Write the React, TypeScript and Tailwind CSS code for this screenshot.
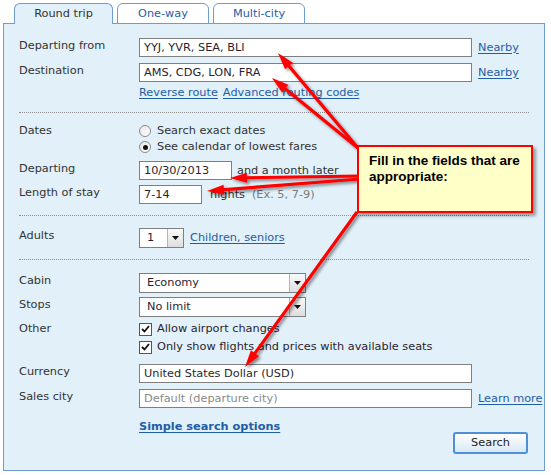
import React from "react";

const Row = ({ label, children, className = "", pt = "pt-[1px]" }: { label?: string; children?: React.ReactNode; className?: string; pt?: string }) => (
  <div className={`flex items-start whitespace-nowrap ${className}`}>
    <div className={`w-[120px] shrink-0 text-[#333] ${pt}`}>{label}</div>
    <div className="flex items-center">{children}</div>
  </div>
);

const TextBox = ({ value, width, placeholder }: { value?: string; width: string; placeholder?: string }) => (
  <input
    readOnly
    defaultValue={value}
    placeholder={placeholder}
    className={`h-[19px] ${width} border border-[#7f7f7f] bg-white px-[4px] text-[#2a1f2e] placeholder:text-[#8a8a8a] outline-none`}
  />
);

const Select = ({ value, width }: { value: string; width: string }) => (
  <div className={`flex h-[20px] ${width} border border-[#7f7f7f] bg-white`}>
    <div className="flex-1 pl-[7px] leading-[18px] text-[#2a1f2e]">{value}</div>
    <div className="flex w-[16px] items-center justify-center border-l border-[#b4b4b4] bg-gradient-to-b from-[#fafafa] to-[#dedede]">
      <svg width="7" height="4" viewBox="0 0 7 4">
        <path d="M0 0h7L3.5 4z" fill="#111" />
      </svg>
    </div>
  </div>
);

const Radio = ({ checked }: { checked?: boolean }) => (
  <span className="flex h-[12px] w-[12px] items-center justify-center rounded-full border border-[#8a8a8a] bg-gradient-to-br from-[#e6e6e6] to-white">
    {checked && <span className="h-[5px] w-[5px] rounded-full bg-[#111]" />}
  </span>
);

const Checkbox = () => (
  <span className="flex h-[13px] w-[13px] items-center justify-center border border-[#555] bg-white">
    <svg width="9" height="8" viewBox="0 0 9 8">
      <path d="M1 4l2.5 2.5L8 1" stroke="#111" strokeWidth="1.8" fill="none" />
    </svg>
  </span>
);

const Link = ({ children, bold }: { children: React.ReactNode; bold?: boolean }) => (
  <a className={`text-[#1f5da6] underline underline-offset-[2px] ${bold ? "font-bold" : ""}`}>{children}</a>
);

const Separator = ({ className }: { className: string }) => (
  <div className={`border-t border-dotted border-[#8c8c8c] ${className}`} />
);

// arrow from (x1,y1) to the tip (x2,y2)
const Arrow = ({ x1, y1, x2, y2 }: { x1: number; y1: number; x2: number; y2: number }) => {
  const dx = x2 - x1;
  const dy = y2 - y1;
  const len = Math.hypot(dx, dy);
  const ux = dx / len;
  const uy = dy / len;
  const head = 17;
  const half = 5;
  const bx = x2 - ux * head;
  const by = y2 - uy * head;
  const pts = `${x2},${y2} ${bx - uy * half},${by + ux * half} ${bx + uy * half},${by - ux * half}`;
  return (
    <g>
      <line x1={x1} y1={y1} x2={bx + ux * 2} y2={by + uy * 2} stroke="#f00" strokeWidth="3.2" />
      <polygon points={pts} fill="#f00" />
    </g>
  );
};

export default function App() {
  return (
    <div
      className="relative h-[475px] w-[551px] overflow-hidden bg-white pl-[3px] pt-[3px] text-[11.3px] leading-[14px]"
      style={{ fontFamily: '"DejaVu Sans", Verdana, sans-serif' }}>
      {/* Tabs */}
      <div className="relative z-10 -mb-px ml-[11px] flex gap-[4px]">
        <div className="flex h-[21px] w-[99px] items-center justify-center rounded-t-[6px] border border-b-0 border-[#6e9ccf] bg-[#e1f0f9] text-[#333]">
          Round trip
        </div>
        <div className="flex h-[21px] w-[92px] items-center justify-center rounded-t-[6px] border border-[#6e9ccf] bg-white text-[#1f5da6]">
          One-way
        </div>
        <div className="flex h-[21px] w-[92px] items-center justify-center rounded-t-[6px] border border-[#6e9ccf] bg-white text-[#1f5da6]">
          Multi-city
        </div>
      </div>

      {/* Panel */}
      <div className="w-[542px] border border-[#6e9ccf] bg-[#e1f0f9] px-[15px] pb-[16px] pt-[14px]">
        <Row label="Departing from">
          <TextBox value="YYJ, YVR, SEA, BLI" width="w-[333px]" />
          <span className="ml-[6px]">
            <Link>Nearby</Link>
          </span>
        </Row>
        <Row label="Destination" className="mt-[6px]">
          <TextBox value="AMS, CDG, LON, FRA" width="w-[333px]" />
          <span className="ml-[6px]">
            <Link>Nearby</Link>
          </span>
        </Row>
        <Row className="mt-[4px]" pt="">
          <span className="flex gap-[5px]">
            <Link>Reverse route</Link>
            <Link>Advanced routing codes</Link>
          </span>
        </Row>

        <Separator className="mt-[12px]" />

        <Row label="Dates" className="mt-[11px]" pt="">
          <Radio />
          <span className="ml-[6px] text-[#333]">Search exact dates</span>
        </Row>
        <Row className="mt-[2px]" pt="">
          <Radio checked />
          <span className="ml-[6px] text-[#333]">See calendar of lowest fares</span>
        </Row>
        <Row label="Departing" className="mt-[7px]">
          <TextBox value="10/30/2013" width="w-[93px]" />
          <span className="ml-[5px] text-[#333]">and a month later</span>
        </Row>
        <Row label="Length of stay" className="mt-[5px]">
          <TextBox value="7-14" width="w-[63px]" />
          <span className="ml-[8px] text-[#333]">nights</span>
          <span className="ml-[7px] text-[#7a7a7a]">(Ex. 5, 7-9)</span>
        </Row>

        <Separator className="mt-[11px]" />

        <Row label="Adults" className="mt-[12px]">
          <Select value="1" width="w-[45px]" />
          <span className="ml-[6px]">
            <Link>Children, seniors</Link>
          </span>
        </Row>

        <Separator className="mt-[11px]" />

        <Row label="Cabin" className="mt-[13px]">
          <Select value="Economy" width="w-[167px]" />
        </Row>
        <Row label="Stops" className="mt-[4px]">
          <Select value="No limit" width="w-[167px]" />
        </Row>
        <Row label="Other" className="mt-[5px]" pt="">
          <Checkbox />
          <span className="ml-[5px] text-[#2a1f2e]">Allow airport changes</span>
        </Row>
        <Row className="mt-[4px]" pt="">
          <Checkbox />
          <span className="ml-[5px] text-[#2a1f2e]">Only show flights and prices with available seats</span>
        </Row>
        <Row label="Currency" className="mt-[10px]">
          <TextBox value="United States Dollar (USD)" width="w-[333px]" />
        </Row>
        <Row label="Sales city" className="mt-[6px]">
          <TextBox placeholder="Default (departure city)" width="w-[333px]" />
          <span className="ml-[6px]">
            <Link>Learn more</Link>
          </span>
        </Row>

        <div className="mt-[12px] flex items-start">
          <div className="w-[120px] shrink-0" />
          <div className="flex-1">
            <Link bold>Simple search options</Link>
          </div>
          <button className="mr-[1px] mt-[12px] h-[22px] w-[75px] rounded-[3px] border-2 border-[#4f8fd6] bg-gradient-to-b from-white to-[#d9e8f6] text-[#222]">
            Search
          </button>
        </div>
      </div>

      {/* Annotation arrows */}
      <svg className="pointer-events-none absolute left-0 top-0" width="551" height="475">
        <defs>
          <filter id="shadow" x="-20%" y="-20%" width="140%" height="140%">
            <feDropShadow dx="2" dy="2" stdDeviation="1.5" floodColor="#000" floodOpacity="0.45" />
          </filter>
        </defs>
        <g filter="url(#shadow)">
          <Arrow x1={358} y1={148} x2={278} y2={53} />
          <Arrow x1={358} y1={148} x2={272} y2={78} />
          <Arrow x1={360} y1={176} x2={230} y2={178} />
          <Arrow x1={360} y1={179} x2={207} y2={191} />
          <Arrow x1={357} y1={212} x2={245} y2={367} />
        </g>
      </svg>

      {/* Callout */}
      <div
        className="absolute left-[357px] top-[145px] h-[68px] w-[176px] border-2 border-[#f00] bg-[#ffffc8] pl-[10px] pt-[6px] text-[13.5px] font-bold leading-[16px] text-black shadow-[3px_3px_3px_rgba(0,0,0,0.35)]"
        style={{ fontFamily: '"Liberation Sans", Arial, sans-serif' }}>
        Fill in the fields that are appropriate:
      </div>
    </div>
  );
}
